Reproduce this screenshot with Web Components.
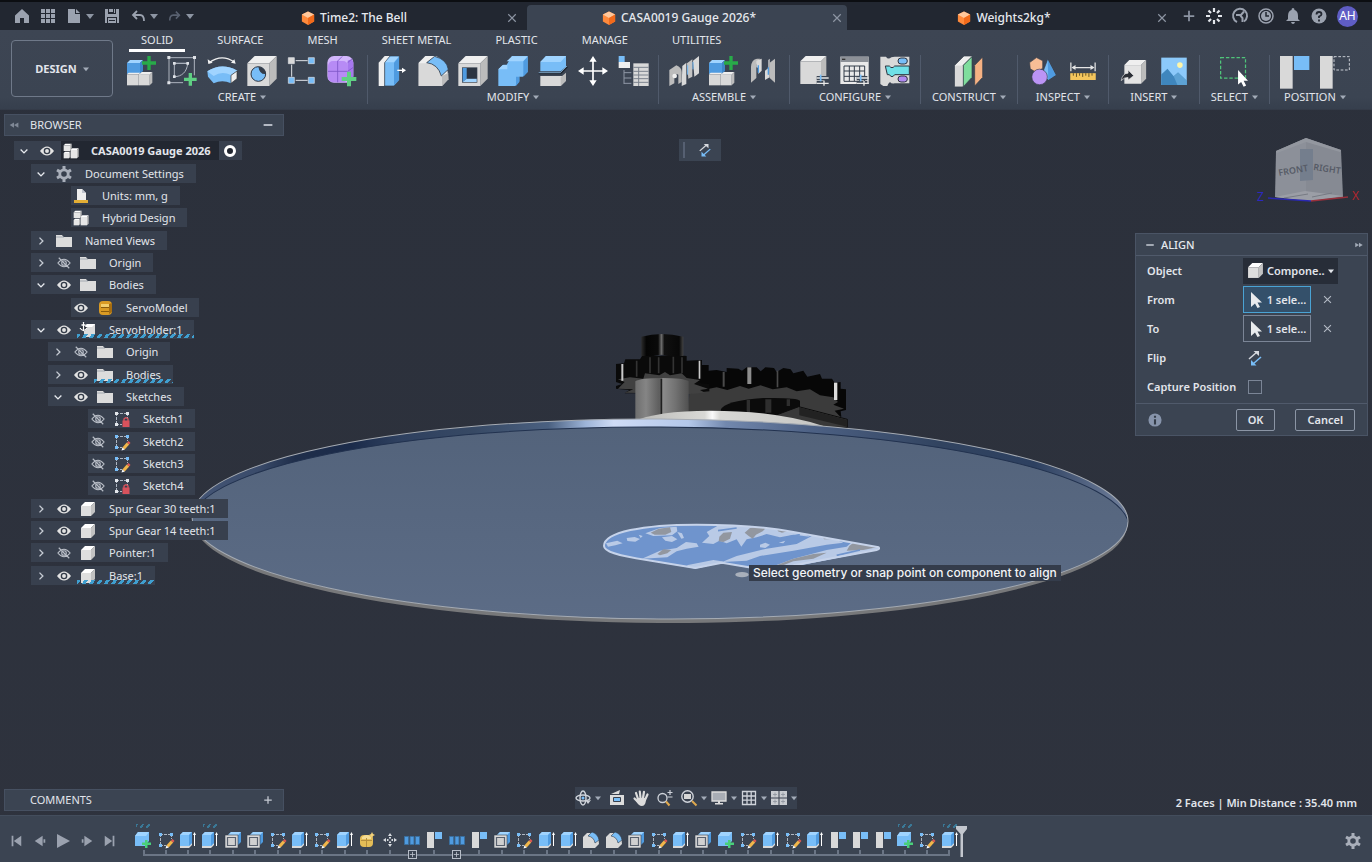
<!DOCTYPE html>
<html lang="en">
<head>
<meta charset="utf-8">
<title>CASA0019 Gauge 2026</title>
<style>
  html, body { margin: 0; height: 100%; background: #2d313c; }
  body {
    font-family: "Noto Sans", "Open Sans", sans-serif;
    font-size: 11px;
    line-height: 16px;
    color: #e2e5eb;
    --bar: #3b4452;
    --line: #505a6b;
    --dark: #222731;
    --accent: #4aa3d4;
  }
</style>
</head>
<body>
<cad-app></cad-app>

<script>
/* ---------- icon artwork ---------- */
const W = '#d9d9d9', WL = '#efefef', WD = '#bcbcbc', B = '#78bdf7', BL = '#a0d4ff', BD = '#4f9be0';
const plus = (x, y, c, r = 19, t = 5) =>
  `<path fill="${c}" d="M${x - t} ${y - r}h${2 * t}v${r - t}h${r - t}v${2 * t}h${t - r}v${r - t}h${-2 * t}v${t - r}h${t - r}v${-2 * t}h${r - t}z"/>`;
const cube = (x, y, w, h, d, a = W, b = WL, c = WD) =>
  `<path fill="${b}" d="M${x} ${y + d}L${x + d} ${y}H${x + w}L${x + w - d} ${y + d}z"/><path fill="${c}" d="M${x + w} ${y}V${y + h - d}L${x + w - d} ${y + h}V${y + d}z"/><path fill="${a}" d="M${x} ${y + d}h${w - d}v${h - d}h${d - w}z"/>`;
const sliders = `<g stroke="#3b4452" stroke-width="12"><path d="M50 66h32M50 80h32"/></g><g stroke="#e8e8e8" stroke-width="4"><path d="M50 66h36M50 82h36M72 75v14"/></g><path stroke="${B}" stroke-width="5" d="M62 56v20"/>`;
const assembly = `${cube(0, 12, 48, 42, 9, BD, BL, '#3e86c9')}${cube(0, 50, 40, 38, 5)}${cube(36, 48, 40, 40, 8)}`;

const ICONS = {
  /* ribbon, drawn on a 90 grid */
  component: [90, assembly + plus(66, 21, '#28ab49', 21, 5)],
  sketch: [90, `<g fill="none" stroke="#aeb4be" stroke-width="3"><path d="M6 5V82M6 5H82M82 5V58M6 80H48"/><path d="M22 22v40c22 0 38-14 40-40zM22 22h40"/></g><g fill="#dfe2e7"><path d="M1 0h9v9H1zM78 0h9v9h-9zM1 76h9v9H1zM18 18h8v8h-8zM58 18h8v8h-8zM18 58h8v8h-8z"/></g>` + plus(70, 70, '#5fd083')],
  revolve: [90, `<path d="M6 20Q44-8 82 18" fill="none" stroke="#f2f2f2" stroke-width="4"/><path fill="#f2f2f2" d="M2 10l2 14 13-4zM72 20l14 3-4-13z"/><path fill="${B}" d="M1 46Q44 18 91 44L72 58V82Q46 70 20 82L3 62z"/><path fill="${BL}" d="M1 46Q44 18 91 44L72 57Q44 44 20 60z"/><path fill="#eee" stroke="#333" stroke-width="2" d="M90 45V68L72 82V58z"/>`],
  hole: [90, cube(1, 0, 88, 90, 22) + `<circle cx="34" cy="54" r="22" fill="${B}" stroke="#2d3440" stroke-width="3"/><path fill="#343c49" d="M34 32a22 22 0 0 1 22 22q-18 2-22-22z"/>`],
  pattern: [90, `<path d="M26 14H62M14 26V62M26 73H62" stroke="#dfe2e7" stroke-width="3"/><g stroke="#dfe2e7" stroke-width="2"><path fill="${W}" d="M4 5h18v18H4z"/><path fill="${B}" d="M64 5h18v18H64zM4 64h18v18H4zM64 64h18v18H64z"/></g>`],
  form: [90, `<rect x="1" y="0" width="78" height="80" rx="20" fill="#d2b6fc"/><path fill="#a678ee" d="M62 14q17-8 17 8v38q0 18-18 20z"/><rect x="3" y="15" width="60" height="64" rx="15" fill="#b78bf5"/><path d="M3 46H62L79 34M32 15V79M32 15L46 1M62 20L76 8" stroke="#7d55c7" stroke-width="2.500" fill="none"/>` + plus(66, 69, '#5fd083', 22, 6)],
  press: [90, `<path fill="${WL}" d="M2 20L20 0H36V70L18 90H2z"/><path fill="${WD}" d="M18 22L36 0V70L18 90z"/><path fill="${B}" stroke="#333c49" stroke-width="2" d="M20 20L36 0H64V72L48 90H20z"/><path fill="${BL}" d="M22 19L37 2H62L48 19z"/><path fill="${BD}" d="M48 20L63 3V72L48 88z"/><path stroke="#fff" stroke-width="4" d="M58 43H76"/><path fill="#fff" d="M72 35l12 8-12 8z"/>`],
  fillet: [90, `<path fill="${WL}" d="M2 20L22 0H54Q90 14 91 70L72 90H2z"/><path fill="${W}" d="M2 22H30Q66 28 72 60V90H2z"/><path fill="${WD}" d="M72 60L91 50V70L72 90z"/><path fill="${B}" stroke="#333c49" stroke-width="2.500" d="M26 20L50 1Q86 10 91 40L70 60Q60 24 26 20z"/>`],
  shell: [90, cube(1, 0, 88, 90, 22) + `<path fill="#3b4452" d="M12 34h46v46H12z"/><path fill="${BD}" d="M14 36h12v32L14 78z"/><path fill="${BL}" d="M26 68h30v10H14z"/><path fill="#2c3542" d="M27 36h29v31H27z"/>`],
  combine: [90, `<path fill="${B}" d="M1 40L16 26H26L42 0H89V48L74 62H64V76L52 90H1z"/><path fill="${BL}" d="M26 16L42 1H89L76 16zM1 40L14 27H28V40z"/><path fill="${BD}" d="M76 16L89 2V48L76 62zM54 62H64V78L54 90z"/>`],
  split: [90, `<path fill="${B}" d="M7 18L24 0H84V32L68 46H7z"/><path fill="${BL}" d="M7 18L24 0H84L68 18z"/><path fill="${W}" d="M7 60H84V74L68 90H7z"/><path fill="${WD}" d="M68 64L84 50V74L68 90z"/><path fill="none" stroke="#1f2630" stroke-width="5" d="M2 52H68L88 32"/><path fill="none" stroke="${BL}" stroke-width="2" d="M2 50H67L87 30"/>`],
  move: [90, `<path stroke="#fff" stroke-width="5" d="M45 8V82M8 45H82"/><path fill="#fff" d="M45 0l11 17H34zM45 90l11-17H34zM0 45l17-11v22zM90 45L73 34v22z"/>`],
  params: [90, `<path fill="${B}" d="M2 0h18v18H2z"/><path fill="${WL}" d="M2 18h18v18H2zM20 18h16v18H20z"/><path d="M18 42V84M18 50H40M18 66H40M18 82H40" stroke="#8f97a5" stroke-width="3"/><path fill="${W}" d="M46 22H92V90H46z"/><path d="M46 34H92M46 46H92M46 57H92M46 68H92M46 79H92M62 34V90" stroke="#7b828d" stroke-width="3"/>`],
  joint: [90, `<path fill="${WD}" d="M1 42L22 28Q38 34 38 48V78L28 84V56q-8-6-12 6V82L1 90z"/><path fill="${W}" d="M40 30L52 20V84L38 90z"/><path fill="#c4c4c4" d="M54 22L70 10V62L58 68z"/><path fill="${W}" d="M72 14L90 0V52L76 62z"/><circle cx="17" cy="60" r="7" fill="${WL}"/><path stroke="${B}" stroke-width="3" d="M56 28V56M72 18V40"/>`],
  asbuilt: [90, `<path fill="${WD}" d="M6 32Q8 10 24 8H34Q26 14 22 26V66L6 80z"/><path fill="${W}" d="M22 14L38 8V44L28 54V36L22 34z"/><path fill="${W}" d="M48 44L58 36V12L62 8V64L48 72z"/><path fill="${WD}" d="M62 20L78 8V80L62 66z"/><path stroke="${BD}" stroke-width="4" d="M28 28V50M58 34V56"/>`],
  configure: [90, cube(1, 0, 78, 84, 16) + sliders],
  table: [90, `<path fill="#e9e9e9" d="M1 2H86V84H1z"/><path fill="#8c9097" d="M1 2H86V18H1z"/><path fill="#333" d="M6 8h10v4H6z"/><path fill="none" stroke="#333c49" stroke-width="3" d="M12 30H74V76H12zM12 45H74M12 61H74M28 30V76M43 30V76M59 30V76"/>` + sliders],
  rules: [90, `<path fill="${W}" d="M1 2H18Q24 12 34 4L44 2H88V82H44Q34 84 30 78Q24 82 22 90H10L1 84z"/><path fill="#6fe0e8" stroke="#2d3440" stroke-width="3" d="M16 30H28Q36 40 44 30H88V56H44Q36 68 28 56H22z"/><rect x="54" y="6" width="28" height="18" rx="9" fill="${B}" stroke="#2d3440" stroke-width="3"/><rect x="54" y="60" width="28" height="18" rx="9" fill="#b08af0" stroke="#2d3440" stroke-width="3"/>`],
  plane: [90, `<path fill="#eee" stroke="#333c49" stroke-width="2" d="M2 28L30 0H56L28 28V92H2z"/><path fill="${W}" d="M3 29H26V91H3z"/><path fill="#7fdd9d" stroke="#333c49" stroke-width="2" d="M28 28L54 2V64L28 92z"/><path fill="#f5b183" stroke="#333c49" stroke-width="2" d="M62 28L86 3V64L62 90z"/>`],
  inspect: [90, `<path fill="#f7bd96" stroke="#333c49" stroke-width="2" d="M2 18L24 2L44 12V36L24 50L4 38z"/><path fill="${B}" stroke="#333c49" stroke-width="2" d="M60 8L86 58L62 74L40 60z"/><path fill="${BD}" d="M60 8L86 58L62 74z"/><circle cx="34" cy="64" r="25" fill="#bb94f5" stroke="#333c49" stroke-width="2"/>`],
  measure: [90, `<path stroke="#e5e5e5" stroke-width="4" d="M6 18V46M84 18V46M12 34H78"/><path fill="#e5e5e5" d="M8 34l13-8v16zM82 34l-13-8v16z"/><path fill="#f3c55c" d="M4 52H86V74H4z"/><path stroke="#5a4b22" stroke-width="3" d="M14 52v8M24 52v12M34 52v8M44 52v12M54 52v8M64 52v12M74 52v8"/>`],
  insert: [90, cube(14, 10, 70, 76, 16, '#e4e4e4') + `<path fill="#2b2f36" stroke="#e8e8e8" stroke-width="2" d="M4 76Q8 52 26 52V42L44 60L26 74V66Q14 64 4 76z"/>`],
  image: [90, `<path fill="#8cc9fa" d="M4 2H86V90H4z"/><circle cx="64" cy="26" r="9" fill="#fff5a8"/><path fill="#3f86bd" d="M4 90V56L24 38L44 62L58 50L86 76V90z"/><path fill="#5da2d4" d="M44 62L58 50L86 76V90H56z"/>`],
  select: [90, `<path fill="none" stroke="#4fc57a" stroke-width="4" stroke-dasharray="11 6" d="M2 2H82V68H2z"/><path fill="#fff" d="M58 42L90 76H76L84 92L76 96L68 80L58 88z"/>`],
  pos1: [90, `<path fill="${W}" d="M0 0h38v98H0z"/><path fill="${B}" d="M42 0h46v42H42z"/>`],
  pos2: [90, `<path fill="${W}" d="M0 0h38v98H0z"/><path fill="none" stroke="#c8ccd3" stroke-width="3" stroke-dasharray="8 5" d="M42 2h46v40H42z"/>`],

  /* title bar, 16 grid */
  home: [16, `<path fill="#9ba2af" d="M8 1L15 7.500V15H10V10H6V15H1V7.500z"/>`],
  apps: [16, `<path fill="#9ba2af" d="M1 1h4v4H1zM6 1h4v4H6zM11 1h4v4h-4zM1 6h4v4H1zM6 6h4v4H6zM11 6h4v4h-4zM1 11h4v4H1zM6 11h4v4H6zM11 11h4v4h-4z"/>`],
  file: [16, `<path fill="#9ba2af" d="M2 1h7v5h5v9H2zM10 1l4 4h-4z"/>`],
  save: [16, `<path fill="#9ba2af" d="M1 1h3v5h8V1h3v14h-2V9H3v6H1zM5 1h4v3H5zM10 1h1v4h-1zM4 10h8v5H4z"/><path stroke="#222731" d="M5 12.500h6"/>`],
  undo: [16, `<path fill="none" stroke="#9ba2af" stroke-width="1.800" d="M3 7h7q4 0 4 6"/><path fill="none" stroke="#9ba2af" stroke-width="1.800" d="M7 3L3 7l4 4"/>`],
  redo: [16, `<path fill="none" stroke="#596170" stroke-width="1.800" d="M13 7H6q-4 0-4 6"/><path fill="none" stroke="#596170" stroke-width="1.800" d="M9 3l4 4-4 4"/>`],
  caret: [8, `<path fill="currentColor" d="M0 2h8L4 7z"/>`],
  doc: [16, `<path fill="#ff8a3c" d="M1 4L8 0.500L15 4V12L8 16L1 12z"/><path fill="#ffc79b" d="M1 4L8 .5L15 4L8 8z"/><path fill="#f26a1b" d="M8 8L15 4V12L8 16z"/>`],
  close: [16, `<path stroke="currentColor" stroke-width="1.600" d="M3 3l10 10M13 3L3 13"/>`],
  add: [16, `<path stroke="currentColor" stroke-width="2" d="M8 2v12M2 8h12"/>`],
  minus: [16, `<path stroke="currentColor" stroke-width="2" d="M3 8h10"/>`],
  spark: [16, `<g stroke="#e3e6eb" stroke-width="2.200"><path d="M8 0v4M8 12v4M0 8h4M12 8h4M2.500 2.500l2.500 2.500M11 11l2.500 2.500M13.500 2.500l-2.500 2.500M5 11l-2.500 2.500"/></g>`],
  job: [16, `<path fill="none" stroke="#9ba2af" stroke-width="2" d="M5 14A7 7 0 1 1 12 13.500"/><path fill="none" stroke="#9ba2af" stroke-width="2" d="M4 7h5l3-3.500M8 7l2.500 3v4"/>`],
  clock: [16, `<circle cx="8" cy="8" r="7" fill="none" stroke="#9ba2af" stroke-width="1.500"/><circle cx="8" cy="8" r="5" fill="#9ba2af"/><path fill="none" stroke="#222731" stroke-width="1.500" d="M8 4v4h3"/>`],
  bell: [16, `<path fill="#9ba2af" d="M8 0q1.500 0 1.500 2Q13 3 13 8v3l2 2H1l2-2V8q0-5 3.500-6Q6.500 0 8 0zM6 14h4q-.5 2-2 2t-2-2z"/>`],
  help: [16, `<circle cx="8" cy="8" r="7.500" fill="#9ba2af"/><path fill="none" stroke="#222731" stroke-width="1.800" d="M5.500 6.500Q5.500 4 8 4t2.500 2.200Q10.500 7.500 8 8.500V10M8 11.500v2"/>`],

  /* browser tree */
  down: [16, `<path fill="none" stroke="#e6e9ee" stroke-width="1.800" d="M3.500 6L8 10.500 12.500 6"/>`],
  right: [16, `<path fill="none" stroke="#c6cbd4" stroke-width="1.800" d="M6 3.500L10.500 8 6 12.500"/>`],
  back: [16, `<path fill="#7f8896" d="M8 5v6L3 8zM13 5v6L8 8z"/>`],
  fwd: [16, `<path fill="#a3abb8" d="M3 5v6l5-3zM8 5v6l5-3z"/>`],
  eye: [16, `<path fill="#e3e3e3" d="M0 8Q8-2.500 16 8Q8 18.500 0 8z"/><circle cx="8" cy="8" r="3.800" fill="#343c49"/><circle cx="8" cy="8" r="2.200" fill="#e3e3e3"/>`],
  eyeoff: [16, `<path fill="none" stroke="#b9bec7" stroke-width="1.300" d="M1 8Q8-.5 15 8Q8 16.500 1 8zM2 2l12 12"/><circle cx="8" cy="8" r="2.600" fill="none" stroke="#b9bec7" stroke-width="1.300"/>`],
  folder: [16, `<path fill="#dcdcdc" d="M0 4H16V14H0zM0 2H6L7.500 4H0z"/><path stroke="#8b929d" stroke-width=".7" d="M0 4h8"/>`],
  gear: [16, `<circle cx="8" cy="8" r="4.200" fill="none" stroke="#a9afba" stroke-width="2.800"/><g stroke="#a9afba" stroke-width="3"><path d="M8 0v3M8 13v3M1 4l2.800 1.600M12.200 10.400L15 12M1 12l2.800-1.600M12.200 5.600L15 4"/></g>`],
  units: [16, `<path fill="#eeeeee" d="M4 1h5l4 4v7H4z"/><path fill="#bfc3cc" d="M9 1v4h4z"/><path fill="#e3ae35" d="M1 12h14v3H1z"/>`],
  hybrid: [48, cube(2, 2, 24, 22, 5, '#e6e6e6', '#fff') + cube(2, 26, 20, 20, 4, '#e6e6e6', '#fff') + cube(23, 16, 24, 30, 5, '#e6e6e6', '#fff')],
  body: [16, `<rect x="2" y="1" width="13" height="14" rx="4" fill="#d99a24"/><path fill="#f3cd6b" d="M4 4h8v3H4z"/><path stroke="#8a5b0c" d="M4 7.500h8M4 11.500h8" fill="none"/><path fill="#a66d10" d="M12 4l3-1v9l-3 2z"/>`],
  anchor: [16, `<path fill="#dcdcdc" d="M4 5L7 2H15V12L12 15H4z"/><path fill="#fff" d="M4 5L7 2H15L12 5z"/><path fill="none" stroke="#222731" stroke-width="3" d="M3.500 1v8M1 5q2.500 5 5 0"/><path fill="none" stroke="#fff" stroke-width="1.300" d="M3.500 0v9M1.500 3h4M0 6q3.500 5 7 0"/>`],
  box: [16, cube(1, 1, 14, 14, 4, '#dedede', '#ffffff', '#c2c2c2')],
  sketchlock: [16, `<path fill="none" stroke="#aeb6c2" stroke-dasharray="3 1" d="M2.500 2v12M2 2.500h12M13.500 2v6M2 13.500h6"/><path fill="#e3e6eb" d="M1 1h3v3H1zM12 1h3v3h-3zM1 12h3v3H1z"/><path fill="#d8525c" d="M8.500 9.500h7V16h-7z"/><path fill="none" stroke="#d8525c" stroke-width="1.400" d="M10 10V8q2-2.500 4 0v2"/>`],
  sketchedit: [16, `<path fill="none" stroke="#aeb6c2" stroke-dasharray="3 1" d="M2.500 2v12M2 2.500h12M13.500 2v5M2 13.500h6"/><path fill="${B}" d="M1 1h3v3H1zM12 1h3v3h-3zM1 12h3v3H1z"/><path stroke="#f1b64a" stroke-width="3.200" d="M9.500 14.500L14 9.500"/><path fill="#fff" d="M7.500 16.500l1-3 2.300 2z"/><path fill="#e25b53" d="M13 8.500l1.500-1.500L16.500 9l-1.500 1.500z"/>`],

  /* dialog */
  cursor: [16, `<path fill="#e9ebee" d="M3 0L14 10.500H9.500L12 15L9.500 16L7 11.500L3 15z"/>`],
  flip: [16, `<path stroke="#d6d9df" stroke-width="1.500" d="M2 9L10 2"/><path fill="#d6d9df" d="M6.500 1H12v5z"/><path stroke="${B}" stroke-width="1.500" d="M14 7L6 14"/><path fill="${B}" d="M4 10v5.500H9.500z"/>`],
  info: [16, `<circle cx="8" cy="8" r="7.500" fill="#8794ab"/><path stroke="#343c49" stroke-width="2.400" d="M8 7v6M8 3v2.500"/>`],

  /* navigation bar */
  orbit: [16, `<ellipse cx="8" cy="8" rx="7" ry="3" fill="none" stroke="#cfd3da" stroke-width="1.400"/><ellipse cx="8" cy="8" rx="3" ry="7" fill="none" stroke="#cfd3da" stroke-width="1.400"/><circle cx="8" cy="8" r="1.500" fill="${B}"/><path fill="#cfd3da" d="M11 11l5-1-3 4z"/>`],
  look: [16, `<path fill="#dcdcdc" d="M1 5h14v10H1zM2 4L11 0 10 4z"/><path fill="${B}" stroke="#38414f" d="M4.500 7.500h7v4h-7z"/>`],
  hand: [16, `<path fill="none" stroke="#dcdcdc" stroke-linecap="round" stroke-width="2.200" d="M5 9L3 3M7.500 8L6.800 1.500M10 8L11 1.800M12 10L14.500 4.500M5 12L1.500 8.500"/><path fill="#dcdcdc" d="M4 8h9q0 8-4 8Q5.500 16 3 11z"/>`],
  zoom: [16, `<circle cx="5.500" cy="8" r="4.500" fill="none" stroke="#cfd3da" stroke-width="1.300"/><path stroke="#e0a94e" stroke-width="2" d="M9 11.500l3.500 4"/><path stroke="#cfd3da" stroke-width="1.200" d="M13 0v5M10.500 2.500h5M10.500 7h5"/>`],
  fit: [16, `<circle cx="6.500" cy="6.500" r="5.700" fill="none" stroke="#cfd3da" stroke-width="1.400"/><path fill="#d6d6d6" d="M3 4h7v5H3z"/><path stroke="#e0a94e" stroke-width="2" d="M11 11l4.500 4.500"/>`],
  display: [16, `<path fill="#a8adb5" stroke="#dcdcdc" stroke-width="1.300" d="M1 2h14v9H1z"/><path fill="#dcdcdc" d="M7 11h2v2h3v1.500H4V13h3z"/>`],
  grid: [16, `<path fill="none" stroke="#cfd3da" stroke-width="1.300" d="M1.500 1.500h13v13h-13zM1.500 6h13M1.500 10.200h13M6 1.500v13M10.200 1.500v13"/>`],
  views: [16, `<path fill="#c9ccd1" d="M0 1h7.500v6.500H0zM8.500 1H16v6.500H8.500zM0 8.500h7.500V15H0zM8.500 8.500H16V15H8.500z"/><path stroke="#8d939d" stroke-width=".8" d="M2 4.500h4M10 4.500h4M2 11.500h4M10 11.500h4M4 2.500v4M12 2.500v4M4 9.500v4M12 9.500v4"/>`],

  /* timeline */
  first: [16, `<path fill="#9ba2af" d="M3 2h2v12H3zM14 2v12L5.500 8z"/>`],
  prev: [16, `<path fill="#9ba2af" d="M11 2v12L2 8zM12 6h2v4h-2z"/>`],
  play: [16, `<path fill="#9ba2af" d="M2 1L15 8 2 15z"/>`],
  next: [16, `<path fill="#9ba2af" d="M5 2v12l9-6zM2 6h2v4H2z"/>`],
  last: [16, `<path fill="#9ba2af" d="M11 2h2v12h-2zM2 2v12l8.500-6z"/>`],
  'tl-comp': [16, `<path fill="${B}" d="M0 4L3 0H14V9L11 12V14H0z"/><path fill="${BL}" d="M0 4L3 0H14L11 4z"/><path fill="#49d07a" d="M10 8h2.500v2.500H16V13h-3.500v3H10v-3H7v-2.500h3z"/>`],
  'tl-extrude': [16, `<path fill="${W}" d="M0 12L3 9H12V13L9 16H0z"/><path fill="${B}" d="M0 3L3 0H12V11L9 14H0z"/><path fill="${BL}" d="M0 3L3 0H12L9 3z"/><path fill="${BD}" d="M9 3L12 0V11L9 14z"/><path stroke="#fff" stroke-width="1" d="M14.500 2v12"/><path fill="#fff" d="M13 3l1.500-3L16 3z"/>`],
  'tl-shell': [16, `<path fill="${BD}" d="M3 3L6 0H16V10L13 13z"/><path fill="${BL}" d="M3 3L6 0H16L13 3z"/><path fill="${W}" stroke="#343c49" stroke-width=".6" d="M0 3h13v13H0z"/><path fill="#d0d0d0" stroke="#59616e" stroke-width="1.200" d="M2.500 5.500h8v8h-8z"/>`],
  'tl-form': [16, `<rect x="1" y="3" width="13" height="12" rx="4" fill="#e4bd57"/><path fill="#f4dc94" d="M3 5q5-4 9 0v2H3z"/><path stroke="#b58f3e" d="M2 8.500h11M7.500 6v9" fill="none"/><path fill="#f4d27a" d="M13 0l1 2 2 1-2 1-1 2-1-2-2-1 2-1z"/>`],
  'tl-move': [16, `<path fill="#d9dce1" d="M8 1l2 3H6zM8 15l2-3H6zM1 8l3-2v4zM15 8l-3-2v4zM7 5h2v1.500H7zM7 9.500h2V11H7zM5 7h1.500v2H5zM9.500 7H11v2H9.500z"/>`],
  'tl-pattern': [16, `<path fill="${BD}" stroke="#3a6f9f" d="M.5 4.500h4v8h-4zM6 4.500h4v8H6zM11.500 4.500h4v8h-4z"/>`],
  'tl-joint': [16, `<path fill="${W}" d="M1 0h7v16H1z"/><path fill="${B}" d="M9 0h7v7H9z"/>`],
  'tl-fillet': [16, `<path fill="${W}" d="M0 5L4 1H9Q16 3 16 12L12 16H0z"/><path fill="${B}" stroke="#333c49" stroke-width=".6" d="M5 4L9 0Q15 2 16 8L12 11Q11 5 5 4z"/>`],
};

/* ---------- shared base ---------- */
class View extends HTMLElement {
  connectedCallback() {
    if (this.shadowRoot) return;
    const t = document.createElement('template');
    t.innerHTML = `<style>
      :host { display: block; box-sizing: border-box; }
      * { box-sizing: border-box; }
      button, select, input { font: inherit; color: inherit; margin: 0; }
      button { background: none; border: 0; padding: 0; display: inline-flex; align-items: center; justify-content: center; }
      a { color: inherit; text-decoration: none; }
      ${this.css()}</style>${this.html()}`;
    this.attachShadow({ mode: 'open' }).append(t.content.cloneNode(true));
  }
  css() { return ''; }
  html() { return '<slot></slot>'; }
  a(name) { return this.getAttribute(name) || ''; }
}
const icon = (name, size = 16) => `<ui-icon name="${name}" size="${size}"></ui-icon>`;

class UiIcon extends View {
  css() { const s = this.a('size') || 16; return `:host{display:block;flex:none;width:${s}px;height:${s}px} svg{display:block;width:100%;height:100%;overflow:visible}`; }
  html() { const [n, art] = ICONS[this.a('name')]; return `<svg viewBox="0 0 ${n} ${n}" aria-hidden="true">${art}</svg>`; }
}

/* ---------- title bar ---------- */
class TitleBar extends View {
  css() { return `
    :host { display: flex; height: 30px; background: var(--dark); border-top: 2px solid #0c0e12; color: #8d95a3; }
    .quick { display: flex; align-items: center; width: 197px; padding-left: 14px; }
    .quick button { margin-right: 10px; }
    .quick button.tight { margin-right: 4px; }
    nav { display: flex; flex: 1; }
    .tools { display: flex; align-items: center; justify-content: space-between; width: 200px; padding: 0 14px 0 10px; }
    .me { width: 21px; height: 21px; border-radius: 50%; background: #5f5dc4; color: #fff; font-size: 12px; }`; }
  html() { return `
    <div class="quick">
      <button aria-label="Home">${icon('home')}</button><button aria-label="Apps">${icon('apps')}</button>
      <button class="tight" aria-label="File">${icon('file')}</button><button aria-label="File menu">${icon('caret', 8)}</button>
      <button aria-label="Save">${icon('save')}</button>
      <button class="tight" aria-label="Undo">${icon('undo')}</button><button aria-label="Undo list">${icon('caret', 8)}</button>
      <button class="tight" aria-label="Redo">${icon('redo', 14)}</button><button aria-label="Redo list">${icon('caret', 8)}</button>
    </div>
    <nav><doc-tab>Time2: The Bell</doc-tab><doc-tab active>CASA0019 Gauge 2026*</doc-tab><doc-tab>Weights2kg*</doc-tab></nav>
    <div class="tools">
      <button aria-label="New tab">${icon('add', 14)}</button><button aria-label="Extensions">${icon('spark')}</button>
      <button aria-label="Jobs">${icon('job')}</button><button aria-label="Recent">${icon('clock')}</button>
      <button aria-label="Notifications">${icon('bell')}</button><button aria-label="Help">${icon('help')}</button>
      <button class="me">AH</button>
    </div>`; }
}
class DocTab extends View {
  css() { return `
    :host { display: flex; flex: 1; align-items: center; margin: 3px 0 0 5px; padding-right: 4px; font-size: 12px; color: #e6e9ee; border-radius: 4px 4px 0 0; }
    :host([active]) { background: var(--bar); }
    a { flex: 1; display: flex; justify-content: center; align-items: center; gap: 5px; font-weight: 500; }
    button { color: #8d95a3; }`; }
  html() { return `<a href="#">${icon('doc', 14)}<span><slot></slot></span></a><button aria-label="Close">${icon('close', 12)}</button>`; }
}

/* ---------- ribbon ---------- */
class CadRibbon extends View {
  css() { return `
    :host { display: flex; height: 80px; background: linear-gradient(#3d4553, #3b4452 85%, #363f4d); border-bottom: 1px solid #343b48; }
    .mode { flex: none; width: 102px; height: 57px; margin: 10px 9px 0 11px; border: 1px solid #6f7989; border-radius: 4px; font-weight: 700; gap: 6px; }
    .mode ui-icon { color: #a3abb8; }
    .main { flex: 1; min-width: 0; display: flex; flex-direction: column; }
    .tabs { display: flex; gap: 20px; padding-left: 7px; height: 22px; }
    .tabs a { padding: 2px 12px 0; border-bottom: 3px solid transparent; }
    .tabs a.on { border-color: #fff; }
    .groups { display: flex; }`; }
  html() { return `
    <button class="mode">DESIGN ${icon('caret', 6)}</button>
    <div class="main">
      <nav class="tabs"><a href="#" class="on">SOLID</a><a href="#">SURFACE</a><a href="#">MESH</a><a href="#">SHEET METAL</a><a href="#">PLASTIC</a><a href="#">MANAGE</a><a href="#">UTILITIES</a></nav>
      <div class="groups">
        <ribbon-group label="CREATE" icons="component sketch revolve hole pattern form"></ribbon-group>
        <ribbon-group label="MODIFY" icons="press fillet shell combine split move params"></ribbon-group>
        <ribbon-group label="ASSEMBLE" icons="joint component asbuilt"></ribbon-group>
        <ribbon-group label="CONFIGURE" icons="configure table rules"></ribbon-group>
        <ribbon-group label="CONSTRUCT" icons="plane"></ribbon-group>
        <ribbon-group label="INSPECT" icons="inspect measure"></ribbon-group>
        <ribbon-group label="INSERT" icons="insert image"></ribbon-group>
        <ribbon-group label="SELECT" icons="select"></ribbon-group>
        <ribbon-group label="POSITION" icons="pos1 pos2"></ribbon-group>
      </div>
    </div>`; }
}
class RibbonGroup extends View {
  css() { return `
    :host { display: flex; flex: none; flex-direction: column; align-items: center; margin-top: 3px; padding: 0 5px; border-left: 1px solid var(--line); height: 49px; }
    :host(:first-child) { border-left: 0; padding-left: 0; }
    .row { display: flex; height: 31px; align-items: flex-start; }
    .row button { width: 40px; height: 31px; }
    .label { gap: 4px; padding: 0 6px; margin-top: 3px; white-space: nowrap; }
    .label ui-icon { color: #a3abb8; }`; }
  html() { return `<div class="row">${this.a('icons').split(' ').map(i => `<button aria-label="${i}">${icon(i, ['select', 'insert', 'image', 'inspect', 'measure'].includes(i) ? 28 : 30)}</button>`).join('')}</div>
    <button class="label">${this.a('label')} ${icon('caret', 6)}</button>`; }
}

/* ---------- side panels ---------- */
class PanelHead extends View {
  css() { return `
    :host { display: flex; align-items: center; height: 22px; background: var(--bar); border: 1px solid #465061; padding: 0 8px 0 2px; }
    .lead { width: 23px; display: flex; }
    h2 { flex: 1; margin: 0; font: inherit; }
    button { color: #c6cbd4; width: 14px; }`; }
  html() { return `<div class="lead">${this.a('lead') ? icon(this.a('lead'), 14) : ''}</div><h2><slot></slot></h2><button aria-label="Toggle">${icon(this.a('tool'), this.a('tool') === 'add' ? 10 : 14)}</button>`; }
}
class TreeRow extends View {
  css() {
    const level = +this.a('level'), leaf = this.hasAttribute('leaf');
    return `
    :host { display: flex; padding-left: ${14 + 17 * level + (leaf ? 23 : 0)}px; height: 19px; }
    .row { display: flex; align-items: center; background: #38404e; padding-right: 12px; height: 19px; white-space: nowrap; position: relative; }
    button { height: 19px; width: 20px; }
    .arrow { margin-right: 3px; } .eye { margin-right: 4px; } .kind { margin-right: 11px; width: 20px; display: flex; justify-content: center; }
    .rest { display: flex; align-items: center; height: 19px; }
    :host([root]) .rest { background: var(--dark); padding-right: 8px; margin-right: 1px; font-weight: 700; }
    :host([root]) .kind { margin-right: 10px; }
    :host([root]) .row { padding-right: 0; }
    input { appearance: none; width: 12px; height: 12px; margin: 0 6px 0 4px; border: 3px solid #fff; border-radius: 50%; background: #222731; }
    .hatch { position: absolute; left: 46px; right: 0; bottom: 1px; height: 4px; background: repeating-linear-gradient(125deg, #3f9fd0 0 3px, transparent 3px 6px); }`;
  }
  html() {
    const vis = this.a('eye');
    return `<div class="row">
      ${this.hasAttribute('leaf') ? '' : `<button class="arrow" aria-label="Expand">${icon(this.hasAttribute('open') ? 'down' : 'right', 12)}</button>`}
      ${vis ? `<button class="eye" aria-label="Visibility">${icon(vis === 'on' ? 'eye' : 'eyeoff', 14)}</button>` : ''}
      <div class="rest"><span class="kind">${icon(this.a('kind'), 16)}</span><span class="name"><slot></slot></span></div>
      ${this.hasAttribute('root') ? '<input type="radio" checked aria-label="Activate component">' : ''}
      ${this.hasAttribute('hatch') ? '<span class="hatch"></span>' : ''}</div>`;
  }
}
class BrowserPanel extends View {
  css() { return `
    :host { display: block; }
    panel-head { width: 280px; margin-left: 4px; }
    .tree { display: grid; grid-auto-rows: 23px 22px 22px; margin-top: 5px; justify-items: start; }`; }
  html() { return `<panel-head lead="back" tool="minus">BROWSER</panel-head>
    <div class="tree">
      <tree-row root level="0" open eye="on" kind="hybrid">CASA0019 Gauge 2026</tree-row>
      <tree-row level="1" open kind="gear">Document Settings</tree-row>
      <tree-row level="2" leaf kind="units">Units: mm, g</tree-row>
      <tree-row level="2" leaf kind="hybrid">Hybrid Design</tree-row>
      <tree-row level="1" kind="folder">Named Views</tree-row>
      <tree-row level="1" eye="off" kind="folder">Origin</tree-row>
      <tree-row level="1" open eye="on" kind="folder">Bodies</tree-row>
      <tree-row level="2" leaf eye="on" kind="body">ServoModel</tree-row>
      <tree-row level="1" open eye="on" kind="anchor" hatch>ServoHolder:1</tree-row>
      <tree-row level="2" eye="off" kind="folder">Origin</tree-row>
      <tree-row level="2" eye="on" kind="folder" hatch>Bodies</tree-row>
      <tree-row level="2" open eye="on" kind="folder">Sketches</tree-row>
      <tree-row level="3" leaf eye="off" kind="sketchlock">Sketch1</tree-row>
      <tree-row level="3" leaf eye="off" kind="sketchedit">Sketch2</tree-row>
      <tree-row level="3" leaf eye="off" kind="sketchedit">Sketch3</tree-row>
      <tree-row level="3" leaf eye="off" kind="sketchlock">Sketch4</tree-row>
      <tree-row level="1" eye="on" kind="box">Spur Gear 30 teeth:1</tree-row>
      <tree-row level="1" eye="on" kind="box">Spur Gear 14 teeth:1</tree-row>
      <tree-row level="1" eye="off" kind="box">Pointer:1</tree-row>
      <tree-row level="1" eye="on" kind="box" hatch>Base:1</tree-row>
    </div>`; }
}

/* ---------- 3D scene ---------- */
class CadScene extends View {
  css() { return `:host { display: block; overflow: hidden; } svg { display: block; width: 100%; height: 100%; }`; }
  html() {
    return `<svg viewBox="0 110 1372 705" preserveAspectRatio="xMidYMid slice" role="img" aria-label="Model view">
    <defs>
      <linearGradient id="rim" x1="192" x2="1128" y1="0" y2="0" gradientUnits="userSpaceOnUse">
        <stop offset="0" stop-color="#455676"/><stop offset=".07" stop-color="#3a4b6a"/><stop offset=".11" stop-color="#1f2e4a"/><stop offset=".17" stop-color="#1b2b4a"/><stop offset=".22" stop-color="#2e405f"/><stop offset=".3" stop-color="#374964"/><stop offset=".38" stop-color="#4a6080"/><stop offset=".42" stop-color="#9db4d8"/><stop offset=".45" stop-color="#cfdcf6"/><stop offset=".53" stop-color="#b4c8ea"/><stop offset=".57" stop-color="#7288ae"/><stop offset=".66" stop-color="#4d6184"/><stop offset=".8" stop-color="#31435f"/><stop offset=".9" stop-color="#2d4060"/><stop offset="1" stop-color="#71809c"/>
      </linearGradient>
      <linearGradient id="face" x2="0" y2="1"><stop offset="0" stop-color="#53637b"/><stop offset="1" stop-color="#5c6c86"/></linearGradient>
      <linearGradient id="bg" x2="0" y2="1"><stop offset="0" stop-color="#2b303b"/><stop offset="1" stop-color="#30343f"/></linearGradient>
      <linearGradient id="hub"><stop offset="0" stop-color="#6e6e6e"/><stop offset=".2" stop-color="#858585"/><stop offset=".45" stop-color="#5d5d5d"/><stop offset=".52" stop-color="#8b8b8b"/><stop offset=".75" stop-color="#727272"/><stop offset="1" stop-color="#505050"/></linearGradient>
      <linearGradient id="shaft"><stop offset="0" stop-color="#2b2b2b"/><stop offset=".12" stop-color="#050505"/><stop offset=".4" stop-color="#0a0a0a"/><stop offset=".48" stop-color="#6a6a6a"/><stop offset=".55" stop-color="#101010"/><stop offset=".9" stop-color="#080808"/><stop offset="1" stop-color="#444"/></linearGradient>
      <linearGradient id="base"><stop offset="0" stop-color="#b9b9b6"/><stop offset=".38" stop-color="#d8d8d5"/><stop offset=".42" stop-color="#fafafa"/><stop offset=".46" stop-color="#d8d8d5"/><stop offset="1" stop-color="#c6c6c3"/></linearGradient>
      <clipPath id="rimclip"><ellipse cx="660" cy="519" rx="468" ry="100"/></clipPath>
      <clipPath id="leaf"><path d="M72 138C72 96 190 74 350 74C450 74 560 80 640 96L896 142Q900 148 890 150L640 200L520 206L426 188L346 206L200 180C110 166 72 154 72 138z"/></clipPath>
    </defs>
    <path fill="url(#bg)" d="M-900 0H2300V1300H-900z"/>

    <g transform="translate(590 310) scale(.33333)">
      <path fill="#070707" d="M330 165H356V182L380 180 410 186V174L445 176 456 182 470 172H500L512 184 526 172 552 174 560 186 580 174 602 178 610 190 640 182 652 200 690 192 696 206 726 206 734 218 752 216V236L768 238V300L752 304 754 320H300V230z"/>
      <path fill="#3b3b3b" d="M300 240L350 238 380 232 412 240 450 228 476 236 512 226 548 238 590 232 620 244 660 238 690 256 730 262 744 276 730 284 762 296 734 302 752 322H290z"/>
      <path fill="#0b0b0b" d="M392 300Q402 272 520 264Q620 262 630 272V300L560 330H400z"/>
      <path fill="#2e2e2e" d="M470 270h10v40h-10zM526 268h18v40h-18zM590 268h10v20h-10z"/>
      <path fill="#8d8d8d" d="M472 172h12v50h-12z"/><path fill="#dcdcdc" d="M732 218h10v52h-10z"/><path fill="#4a4a4a" d="M398 186h6v44h-6zM560 182h5v50h-5z"/>
      <path fill="#393939" stroke="#0c0c0c" stroke-width="3" d="M556 316L626 290 772 328V352H626z"/><path fill="#222" d="M628 292L772 330V350L628 316z"/>
      <path fill="#0a0a0a" d="M78 162L102 160 106 148H150L156 138H210L244 134 290 138V152L336 150V208L320 214 334 220 358 222V244L300 250H104L118 240 78 236V228L96 222 78 216z"/>
      <path fill="#414141" d="M84 236L104 216 84 208 120 202 160 206 165 190 208 196 225 186 240 196 275 190 290 204 330 210 312 222 354 236 330 240 345 248 300 252 104 248 130 238z"/>
      <path stroke="#333" stroke-width="5" d="M140 152V200M180 142V190M206 142V190M250 140V190M276 142V190"/>
      <path fill="#c9c9c9" d="M94 162h6v50h-6zM326 152h5v54h-5z"/>
      <path fill="url(#shaft)" d="M154 80Q215 64 280 80V138H244L215 134 190 138H154z"/>
      <path fill="url(#hub)" d="M136 330V214Q150 204 216 204T296 214V330z"/><path stroke="#1f1f1f" stroke-width="5" d="M214 206V320"/>
      <path fill="url(#base)" d="M126 336Q200 302 360 302Q560 302 700 348H126z"/>
    </g>

    <g transform="rotate(.3 660 520)">
      <ellipse cx="660" cy="523" rx="467" ry="100" fill="#77787a"/>
      <ellipse cx="660" cy="519" rx="468" ry="100" fill="url(#rim)"/>
      <g clip-path="url(#rimclip)"><ellipse cx="660" cy="525" rx="469" ry="98" fill="url(#face)" stroke="#22324f" stroke-width="1"/></g>
      <ellipse cx="660" cy="519" rx="468" ry="100" fill="none" stroke="#a5abb3" stroke-width="1"/>
    </g>

    <g transform="translate(580 500) scale(.33333)">
      <g clip-path="url(#leaf)">
        <path fill="#6f94cd" d="M60 60H910V220H60z"/>
        <path fill="#b9cae6" d="M78 130L112 122 128 130 106 136 84 140zM140 114l24-3 16 6-14 8-24-2zM196 100L240 84 290 80 292 94 276 106 220 108zM246 112L276 108 292 118 276 126 256 122zM366 128L388 108 380 96 412 78 520 74 660 96 690 110 640 104 600 112 560 102 530 112 500 118 484 140 470 118 440 130 418 122 400 132zM540 134l16-6 14 6-14 10-16-2zM186 176L240 152 290 144 318 126 350 130 356 140 320 146 290 154 262 172zM426 186L470 168 560 146 650 132 700 106 750 112 790 128 740 134 640 152 540 168 500 182zM320 196L400 180 440 186 346 210zM560 206L640 176 740 150 800 140 820 122 900 140 900 160 640 210zM176 104L188 108 182 114zM596 128l20-6-6 8zM292 96l14 4 6 14-8 2z"/>
        <path fill="#9297a0" d="M212 98L236 86 270 82 274 96 256 104 224 104zM232 162L250 148 274 150 262 160 240 166zM418 110L430 98 456 96 450 116 430 126 416 124zM494 98L510 84 534 78 560 82 548 94 528 104 518 116 506 108zM590 84L628 92 606 98 594 94zM726 106L760 118 732 118zM590 196L640 176 700 162 740 158 700 176 640 184 610 196zM808 138L820 128 890 142 850 150 800 152z"/>
        <path stroke="#6f94cd" stroke-width="5" d="M770 166L840 150M414 92L470 84M620 112l40-8"/>
      </g>
      <path fill="none" stroke="#c6d3ea" stroke-width="6" stroke-linejoin="round" d="M640 196L890 150Q900 148 896 142L640 96C560 80 450 74 350 74C190 74 72 96 72 138C72 154 110 166 200 180L346 204 426 188L520 204"/>
      <ellipse cx="486" cy="224" rx="20" ry="8" fill="#a9b0bb"/>
    </g>
    </svg>`;
  }
}
class ViewCube extends View {
  css() { return `:host { display: block; width: 106px; height: 72px; } svg { display: block; width: 100%; height: 100%; overflow: visible; } text { font-family: "Noto Sans", sans-serif; }`; }
  html() { return `<svg viewBox="1254 135 106 72" aria-label="View cube" role="img">
    <path fill="#8c9099" d="M1276 151L1306 138V201L1275 197z"/><path fill="#868a93" d="M1306 138L1341 150 1343 197 1311 201 1306 201z"/>
    <path fill="#93979f" d="M1276 151L1306 138 1341 150 1340 152 1306 142 1277 153z"/>
    <path fill="#747e8d" d="M1300 149L1313 149V180L1300 181z"/><path fill="#9b9ea6" d="M1275 197L1305 191 1343 196 1311 201z"/><path stroke="#777b84" stroke-width="1" fill="none" d="M1284 198L1308 194M1312 197L1332 193"/>
    <g font-size="9" font-weight="600" fill="#565b66"><text x="1279" y="176" transform="rotate(-10 1279 176)">FRONT</text><text x="1313" y="170" transform="rotate(8 1313 170)">RIGHT</text></g>
    <path stroke="#2a28b0" stroke-width="1.500" d="M1268 198L1311 201"/><path stroke="#98303c" stroke-width="1.500" d="M1311 201L1348 197"/>
    <g font-size="12"><text x="1257" y="201" fill="#2c28c0">Z</text><text x="1352" y="200" fill="#b0262e">X</text></g></svg>`; }
}

/* ---------- align dialog ---------- */
class AlignDialog extends View {
  css() { return `
    :host { display: block; width: 233px; background: var(--bar); border: 1px solid #4a5465; font-weight: 600; }
    header { display: flex; align-items: center; gap: 5px; height: 22px; padding: 0 2px 0 8px; border-bottom: 1px solid #505a6b; font-weight: 500; color: #c6cbd4; }
    h2 { flex: 1; margin: 0; font: inherit; color: #e6e9ee; }
    .fields { display: grid; grid-template-columns: 96px auto 1fr; grid-auto-rows: 29px; align-items: center; padding: 0 0 2px 11px; }
    .fields > :nth-child(3n+1) { white-space: nowrap; }
    .drop { display: flex; align-items: center; grid-column: 2 / 4; justify-self: start; width: 95px; height: 26px; background: #272d38; padding: 0 4px; gap: 3px; }
    select { appearance: none; background: none; border: 0; padding: 0; flex: 1; min-width: 0; }
    .pick { width: 68px; height: 27px; border: 1px solid #7b8596; gap: 3px; }
    .pick.on { border-color: var(--accent); background: #34506a; }
    .x { width: 32px; color: #b4bac5; }
    .flip { width: 24px; }
    input { appearance: none; width: 14px; height: 14px; border: 1px solid #7b8596; margin-left: 5px; }
    footer { display: flex; align-items: center; border-top: 1px solid #505a6b; height: 32px; padding: 0 12px; gap: 20px; }
    footer ui-icon { margin-right: auto; }
    footer button { height: 22px; border: 1px solid #8b95a5; border-radius: 2px; padding: 0 11px; }`; }
  html() { return `
    <header>${icon('minus', 12)}<h2>ALIGN</h2>${icon('fwd', 12)}</header>
    <div class="fields">
      <label for="obj">Object</label><div class="drop">${icon('box', 17)}<select id="obj"><option>Compone...</option></select>${icon('caret', 6)}</div>
      <span id="f">From</span><button class="pick on" aria-labelledby="f">${icon('cursor')}<span>1 sele...</span></button><button class="x" aria-label="Clear from">${icon('close', 11)}</button>
      <span id="t">To</span><button class="pick" aria-labelledby="t">${icon('cursor')}<span>1 sele...</span></button><button class="x" aria-label="Clear to">${icon('close', 11)}</button>
      <span>Flip</span><button class="flip" aria-label="Flip">${icon('flip')}</button><span></span>
      <label for="cap">Capture Position</label><input id="cap" type="checkbox"><span></span>
    </div>
    <footer>${icon('info', 14)}<button>OK</button><button>Cancel</button></footer>`; }
}

/* ---------- navigation bar ---------- */
class NavBar extends View {
  css() { return `
    :host { display: flex; align-items: center; gap: 4px; width: max-content; height: 22px; background: #38404e; color: #a3abb8; }
    .wide { margin-left: 4px; }`; }
  html() {
    const wide = ['look', 'hand', 'zoom', 'fit'];
    return ['orbit', '', 'look', 'hand', 'zoom', 'fit', '', 'display', '', 'grid', '', 'views', '']
      .map(n => n ? `<button ${wide.includes(n) ? 'class="wide"' : ''} aria-label="${n}">${icon(n)}</button>` : `<button aria-label="More">${icon('caret', 6)}</button>`).join('');
  }
}

/* ---------- timeline ---------- */
class CadTimeline extends View {
  css() { return `
    :host { display: flex; height: 47px; background: var(--bar); border-top: 1px solid #434d5c; }
    .play { display: flex; align-items: center; padding: 4px 0 0 4px; width: 132px; flex: none; }
    .play button { width: 23px; height: 23px; margin-right: 1px; }
    .play button:nth-child(2n) { margin-right: 0; }
    .items { display: flex; width: 829px; }
    tl-item { flex: 1; }
    .end { width: 11px; margin: 10px 0 0 -5px; }
    .end svg { display: block; }
    .gear { margin: 4px 11px 0 auto; }`; }
  html() {
    const kinds = 'comp* sketch extrude extrude* shell shell sketch extrude sketch extrude form move pattern+ joint pattern+ joint shell sketch extrude extrude fillet fillet shell sketch extrude shell comp sketch extrude sketch extrude joint joint joint comp* sketch extrude*'.split(' ');
    return `<div class="play">${['first', 'prev', 'play', 'next', 'last'].map(n => `<button aria-label="${n}">${icon(n, n === 'play' ? 16 : 14)}</button>`).join('')}</div>
      <div class="items">${kinds.map(k => `<tl-item kind="${k.replace(/[*+]/, '')}" ${k.endsWith('*') ? 'hatch' : ''} ${k.endsWith('+') ? 'group' : ''}></tl-item>`).join('')}</div>
      <div class="end"><svg width="11" height="32" viewBox="0 0 11 32"><path fill="#c3c7ce" d="M0 0H11V3L7 8V31H4.500V8L0 3z"/></svg></div>
      <button class="gear" aria-label="Settings">${icon('gear')}</button>`;
  }
}
class TlItem extends View {
  css() { return `
    :host { display: flex; flex-direction: column; align-items: center; min-width: 0; }
    .hatch { height: 4px; width: 14px; margin: 8px 0 4px; }
    :host([hatch]) .hatch { background: repeating-linear-gradient(125deg, #3a7896 0 2px, transparent 2px 5px); }
    .rule { align-self: stretch; display: flex; justify-content: center; height: 6px; margin-top: 2px; border-bottom: 2px solid #6b7585; }
    .rule::before { content: ""; width: 2px; height: 4px; background: #6b7585; }
    :host(:first-child) .rule { margin-left: 11px; justify-content: flex-start; }
    :host(:last-child) .rule { margin-right: 11px; justify-content: flex-end; }
    .grp { color: #b7bdc8; width: 9px; height: 9px; background: #3b4452; border: 1px solid #b7bdc8; margin-top: -6px; display: flex; position: relative; }`; }
  html() {
    const k = this.a('kind');
    return `<span class="hatch"></span><button aria-label="${k}">${icon(k === 'sketch' ? 'sketchedit' : 'tl-' + k, 16)}</button><span class="rule"></span>${this.hasAttribute('group') ? `<span class="grp">${icon('add', 7)}</span>` : ''}`;
  }
}

/* ---------- application ---------- */
class CadApp extends View {
  css() { return `
    :host { display: grid; grid-template-columns: minmax(0, 1fr); grid-template-rows: auto auto 1fr auto; min-height: 100vh; }
    main { position: relative; display: grid; min-height: 0; overflow: hidden; }
    cad-scene { position: absolute; inset: 0; }
    browser-panel { position: absolute; left: 0; top: 4px; }
    .comments { position: absolute; left: 4px; bottom: 4px; width: 280px; }
    .mini { position: absolute; top: 29px; left: 27px; right: 0; margin: 0 auto; width: 42px; height: 22px; background: var(--bar); display: flex; align-items: center; padding-left: 4px; gap: 13px; }
    .mini::before { content: ""; width: 2px; height: 16px; background: #566072; }
    view-cube { position: absolute; right: 12px; top: 25px; }
    align-dialog { position: absolute; right: 4px; top: 123px; }
    nav-bar { position: absolute; left: 0; right: 0; margin: 0 auto; bottom: 6px; }
    .status { position: absolute; right: 15px; bottom: 4px; font-weight: 600; }
    .hint { position: absolute; left: 749px; top: 455px; background: #343c4b; padding: 0 4px; font: 500 12px/16px Inter, sans-serif; color: #f2f4f7; white-space: nowrap; }`; }
  html() { return `
    <title-bar></title-bar><cad-ribbon></cad-ribbon>
    <main>
      <cad-scene></cad-scene>
      <browser-panel></browser-panel>
      <div class="mini"><button aria-label="Flip">${icon('flip', 14)}</button></div>
      <view-cube></view-cube>
      <align-dialog></align-dialog>
      <div class="hint" role="tooltip">Select geometry or snap point on component to align</div>
      <panel-head class="comments" tool="add">COMMENTS</panel-head>
      <nav-bar></nav-bar>
      <div class="status">2 Faces | Min Distance : 35.40 mm</div>
    </main>
    <cad-timeline></cad-timeline>`; }
}

Object.entries({
  'ui-icon': UiIcon, 'title-bar': TitleBar, 'doc-tab': DocTab, 'cad-ribbon': CadRibbon, 'ribbon-group': RibbonGroup,
  'panel-head': PanelHead, 'tree-row': TreeRow, 'browser-panel': BrowserPanel, 'cad-scene': CadScene, 'view-cube': ViewCube,
  'align-dialog': AlignDialog, 'nav-bar': NavBar, 'tl-item': TlItem, 'cad-timeline': CadTimeline, 'cad-app': CadApp,
}).forEach(([name, cls]) => customElements.define(name, cls));
</script>
</body>
</html>
